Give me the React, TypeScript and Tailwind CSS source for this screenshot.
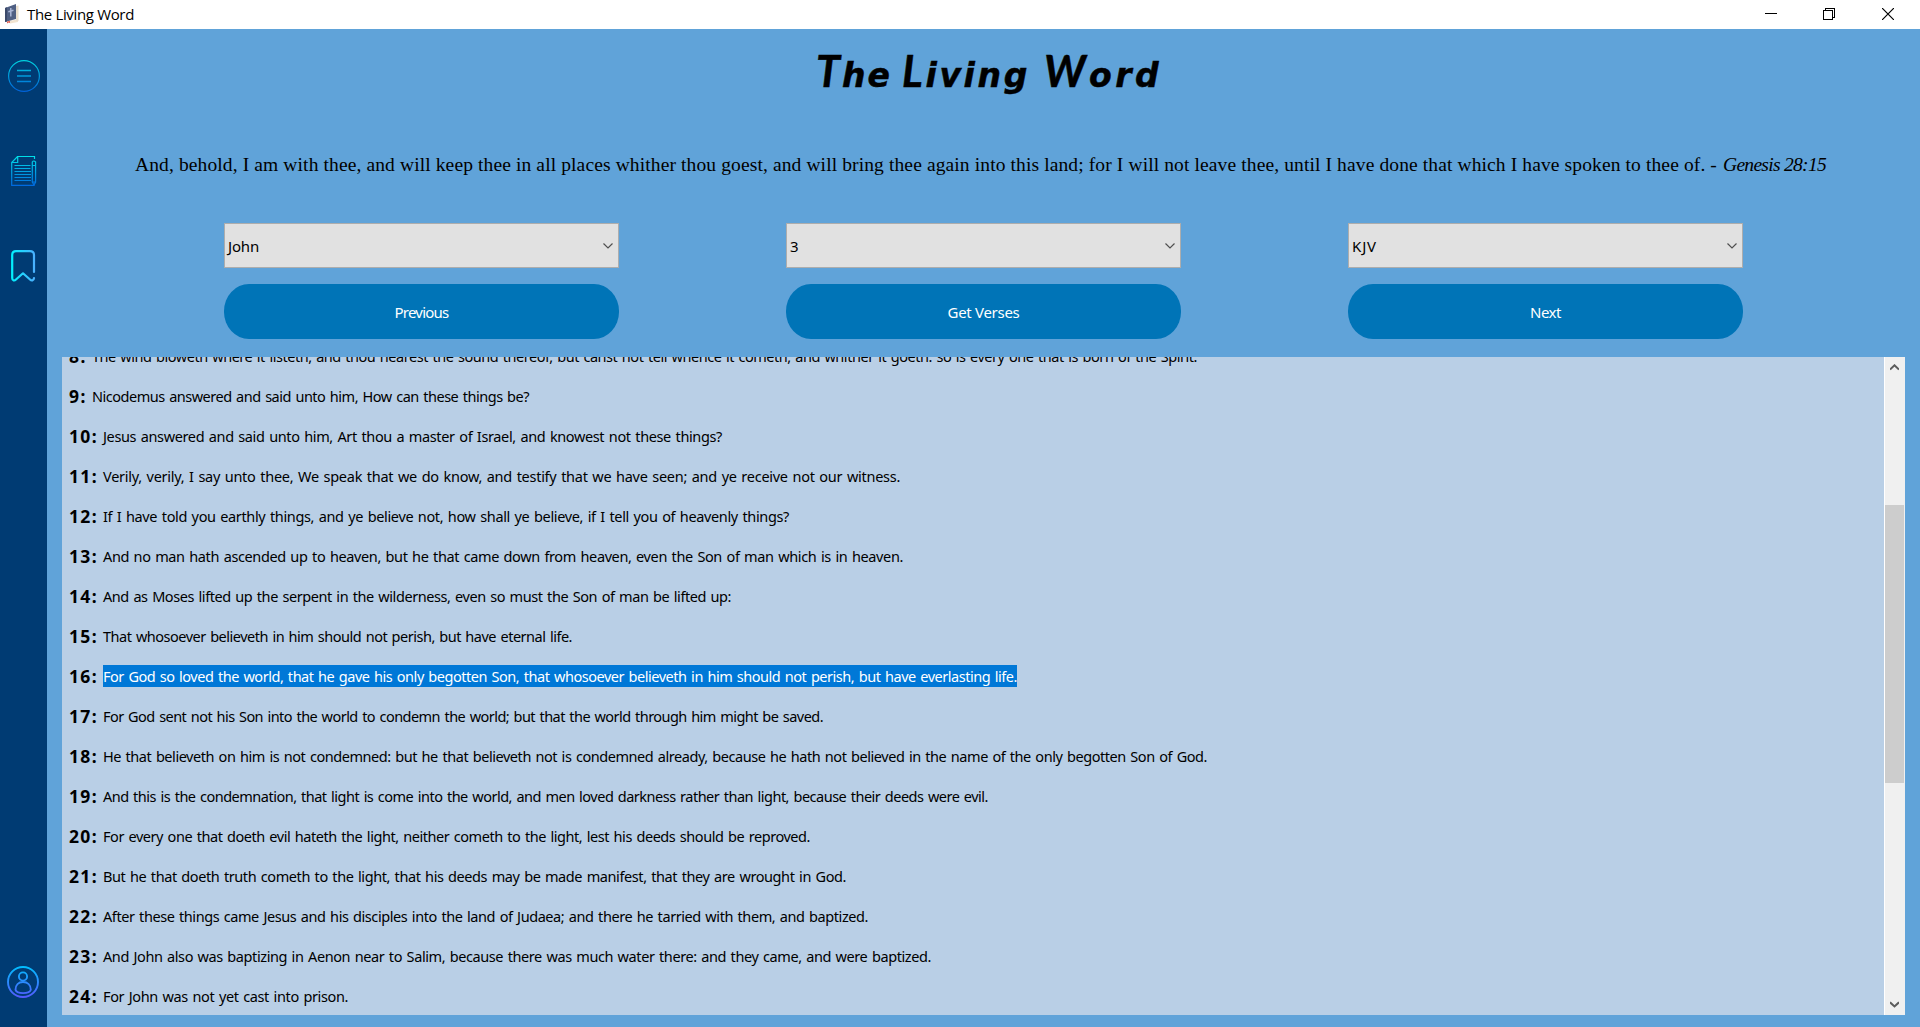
import { useLayoutEffect, useRef, type ReactNode } from "react";

/** Spreads its text over an exact width by adjusting the tracking. */
function Fit({ width, className = "", children }: { width: number; className?: string; children: ReactNode }) {
  const ref = useRef<HTMLSpanElement>(null);
  useLayoutEffect(() => {
    const el = ref.current;
    if (!el) return;
    el.style.letterSpacing = "0px";
    const n = (el.textContent || "").length;
    const natural = el.getBoundingClientRect().width;
    el.style.letterSpacing = `${(width - natural) / n}px`;
  }, [width]);
  return (
    <span ref={ref} className={`inline-block shrink-0 whitespace-pre ${className}`}>
      {children}
    </span>
  );
}

const verses: [number, number, string][] = [
  [8, 1105, "The wind bloweth where it listeth, and thou hearest the sound thereof, but canst not tell whence it cometh, and whither it goeth: so is every one that is born of the Spirit."],
  [9, 437, "Nicodemus answered and said unto him, How can these things be?"],
  [10, 619, "Jesus answered and said unto him, Art thou a master of Israel, and knowest not these things?"],
  [11, 797, "Verily, verily, I say unto thee, We speak that we do know, and testify that we have seen; and ye receive not our witness."],
  [12, 686, "If I have told you earthly things, and ye believe not, how shall ye believe, if I tell you of heavenly things?"],
  [13, 800, "And no man hath ascended up to heaven, but he that came down from heaven, even the Son of man which is in heaven."],
  [14, 628, "And as Moses lifted up the serpent in the wilderness, even so must the Son of man be lifted up:"],
  [15, 469, "That whosoever believeth in him should not perish, but have eternal life."],
  [16, 914, "For God so loved the world, that he gave his only begotten Son, that whosoever believeth in him should not perish, but have everlasting life."],
  [17, 720, "For God sent not his Son into the world to condemn the world; but that the world through him might be saved."],
  [18, 1104, "He that believeth on him is not condemned: but he that believeth not is condemned already, because he hath not believed in the name of the only begotten Son of God."],
  [19, 885, "And this is the condemnation, that light is come into the world, and men loved darkness rather than light, because their deeds were evil."],
  [20, 707, "For every one that doeth evil hateth the light, neither cometh to the light, lest his deeds should be reproved."],
  [21, 743, "But he that doeth truth cometh to the light, that his deeds may be made manifest, that they are wrought in God."],
  [22, 765, "After these things came Jesus and his disciples into the land of Judaea; and there he tarried with them, and baptized."],
  [23, 828, "And John also was baptizing in Aenon near to Salim, because there was much water there: and they came, and were baptized."],
  [24, 245, "For John was not yet cast into prison."],
];

const columns = [
  { value: "John", valueWidth: 31, action: "Previous", actionWidth: 54 },
  { value: "3", valueWidth: 8, action: "Get Verses", actionWidth: 72 },
  { value: "KJV", valueWidth: 25, action: "Next", actionWidth: 31 },
];

function TitleBar() {
  return (
    <header className="flex h-[29px] shrink-0 items-center bg-white pl-[5px]">
      <svg width="14" height="20" viewBox="0 0 14 20" className="-mt-px">
        <path d="M3 17 13 15.500V18L5 19.500Z" fill="#f1e4d0" />
        <path d="M11 2 13.500 1.500V17L11 17Z" fill="#eadfce" />
        <path d="M0 4 11 0V15L0 18Z" fill="#4f5f83" />
        <path d="M0 4 2 3.300V17.500L0 18Z" fill="#3c4a6b" />
        <path d="M5.800 4V12.500M3.300 7.800 8.500 6.300" stroke="#a9b5d6" strokeWidth="1.500" fill="none" />
        <path d="M2 17.500 5 17V19L3.500 18.500 2 19.500Z" fill="#e35b4b" />
      </svg>
      <Fit width={107} className="-mt-[2px] ml-[8px] font-['Open_Sans','Noto_Sans',sans-serif] text-[15px] leading-[20px] text-black">
        The Living Word
      </Fit>
      <div className="-mt-px ml-auto flex items-center pr-[26px]">
        <svg width="12" height="12" viewBox="0 0 12 12" className="mr-[46px]" shapeRendering="crispEdges">
          <path d="M0 5.500H12" stroke="#000" />
        </svg>
        <svg width="12" height="12" viewBox="0 0 12 12" className="mr-[47px]" shapeRendering="crispEdges" fill="none" stroke="#000">
          <path d="M.5 2.500H9.500V11.500H.5ZM2.500 2.500V.5H11.500V9.500H9.500" />
        </svg>
        <svg width="12" height="12" viewBox="0 0 12 12" fill="none" stroke="#000" strokeWidth="1.200">
          <path d="M0 0 12 12M12 0 0 12" />
        </svg>
      </div>
    </header>
  );
}

function Sidebar() {
  return (
    <nav className="flex w-[47px] shrink-0 flex-col items-start bg-[#003b73] pt-[31px]">
      <svg width="32" height="32" viewBox="0 0 32 32" fill="none" className="ml-[8px]">
        <defs>
          <linearGradient id="menuTone" gradientUnits="userSpaceOnUse" x1="0" y1="0" x2="0" y2="32">
            <stop stopColor="#00d5e0" />
            <stop offset="1" stopColor="#0060d8" />
          </linearGradient>
        </defs>
        <circle cx="16" cy="16" r="15.400" stroke="url(#menuTone)" strokeWidth="1.200" />
        <path d="M9 10.500H23M9 16H23M9 21.500H23" stroke="url(#menuTone)" strokeWidth="1.300" />
      </svg>
      <svg width="26" height="31" viewBox="0 0 26 31" fill="none" className="ml-[11px] mt-[63px]">
        <defs>
          <linearGradient id="noteTone" gradientUnits="userSpaceOnUse" x1="0" y1="0" x2="0" y2="31">
            <stop stopColor="#00e5e8" />
            <stop offset="1" stopColor="#0068e0" />
          </linearGradient>
        </defs>
        <g stroke="url(#noteTone)" strokeWidth="1.200">
          <path d="M23.500 4V1.500H6.500L.7 7.500V30.300H23.500" />
          <path d="M6.700 2V7.500H1" />
          <path d="M3.500 10.500H19.500M3.500 13.500H19.500M3.500 16.500H20M3.500 19.500H20M3.500 22.500H20M3.500 25.500H20" />
          <path d="M21.300 7Q22.700 5 24.600 7V27L23 30 21.300 27ZM21.300 10.500H24.600M21.300 27H24.600" />
        </g>
      </svg>
      <svg width="26" height="32" viewBox="0 0 26 32" fill="none" className="ml-[11px] mt-[64px]">
        <defs>
          <linearGradient id="markTone" gradientUnits="userSpaceOnUse" x1="0" y1="0" x2="25" y2="0">
            <stop stopColor="#00f2fe" />
            <stop offset="1" stopColor="#4facfe" />
          </linearGradient>
        </defs>
        <path
          d="M23 22V5Q23 1.200 19 1.200H5Q1.200 1.200 1.200 5V28C1.200 31 3.500 31 5 29.500L12 23.300 19 29.500C20.500 31 22.800 30.800 23 28.200"
          stroke="url(#markTone)"
          strokeWidth="2.200"
          strokeLinecap="round"
          strokeLinejoin="round"
        />
      </svg>
      <svg width="32" height="32" viewBox="0 0 32 32" fill="none" className="mb-[29px] ml-[7px] mt-auto">
        <defs>
          <linearGradient id="userTone" gradientUnits="userSpaceOnUse" x1="0" y1="0" x2="0" y2="32">
            <stop stopColor="#00c0ff" />
            <stop offset="1" stopColor="#5558ff" />
          </linearGradient>
        </defs>
        <g stroke="url(#userTone)" strokeWidth="1.900">
          <circle cx="16" cy="16" r="15" />
          <circle cx="16" cy="10.500" r="4.100" />
          <path d="M8.500 23.800C8.500 19 11.500 16 16 16S23.800 19 23.800 23.800C22.500 28.200 9.500 28.200 8.500 23.800Z" />
        </g>
      </svg>
    </nav>
  );
}

function Heading() {
  const word = "font-['DejaVu_Sans',sans-serif] text-[33px] font-bold italic leading-[56px] [-webkit-text-stroke:0.5px_#000] [stroke-linejoin:round]";
  const cap = "font-['Lato',sans-serif] text-[43px]";
  return (
    <h1 className="ml-[769px] mt-[14px] flex h-[64px] items-baseline text-black">
      <Fit width={76} className={word}><span className={cap}>T</span>he</Fit>
      <Fit width={128} className={`ml-[10px] ${word}`}><span className={cap}>L</span>iving</Fit>
      <Fit width={118} className={`ml-[14px] ${word}`}><span className={cap}>W</span>ord</Fit>
    </h1>
  );
}

const body = "font-['Noto_Sans',sans-serif] text-[14.5px] leading-[22px] [word-spacing:1.2px]";

function Controls() {
  return (
    <div className="mt-[43px] flex justify-center gap-[167px]">
      {columns.map((c) => (
        <div key={c.value} className="flex w-[395px] flex-col gap-4">
          <div className="flex h-[45px] items-center border border-[#adadad] bg-[#e1e1e1] pl-[3px] pr-[5px]">
            <Fit width={c.valueWidth} className="mt-px font-['Noto_Sans',sans-serif] text-[15px] leading-[20px] text-black">{c.value}</Fit>
            <svg width="10" height="6" viewBox="0 0 10 6" fill="none" className="ml-auto">
              <path d="M.5 .5 5 5 9.500 .5" stroke="#505050" strokeWidth="1.200" />
            </svg>
          </div>
          <button className="flex h-[55px] items-center justify-center rounded-[25px/27px] bg-[#0074b7] text-white">
            <Fit width={c.actionWidth} className="mt-px font-['Noto_Sans',sans-serif] text-[15px] leading-[20px]">{c.action}</Fit>
          </button>
        </div>
      ))}
    </div>
  );
}

function Verses() {
  return (
    <section className="ml-[15px] mt-[18px] flex h-[658px] w-[1843px] bg-[#b9cfe6]">
      <div className="h-full w-[1822px] overflow-hidden">
        <div className="-mt-[21px] flex flex-col pl-[7px] text-black">
          {verses.map(([n, width, text]) => (
            <p key={n} className="flex h-[40px] items-center">
              <Fit width={n < 10 ? 18 : 29} className="mr-[5px] font-['Noto_Sans',sans-serif] text-[17.5px] font-bold leading-[22px]">
                {`${n}:`}
              </Fit>
              {n === 16 ? (
                <span className="flex bg-[#0078d7] text-white">
                  <Fit width={width} className={body}>{text}</Fit>
                </span>
              ) : (
                <Fit width={width} className={body}>{text}</Fit>
              )}
            </p>
          ))}
        </div>
      </div>
      <div className="flex w-[21px] flex-col border-l border-white bg-[#f0f0f0]">
        <svg width="9" height="7" viewBox="0 0 9 7" fill="none" className="ml-[5px] mt-[7px]">
          <path d="M0 5.500 4.500 1.300 9 5.500" stroke="#5c5c5c" strokeWidth="2" />
        </svg>
        <div className="mt-[134px] h-[278px] w-[19px] bg-[#cdcdcd]" />
        <svg width="9" height="7" viewBox="0 0 9 7" fill="none" className="mb-[7px] ml-[5px] mt-auto">
          <path d="M0 1.300 4.500 5.500 9 1.300" stroke="#5c5c5c" strokeWidth="2" />
        </svg>
      </div>
    </section>
  );
}

export default function App() {
  return (
    <div className="flex h-[1027px] w-[1920px] flex-col overflow-hidden bg-[#60a3d9]">
      <TitleBar />
      <div className="flex min-h-0 flex-1">
        <Sidebar />
        <main className="flex min-w-0 flex-1 flex-col">
          <Heading />
          <div className="ml-[88px] mt-[43px] flex h-[30px] items-center font-['Liberation_Serif',serif] text-[19.5px] leading-[30px] text-black">
            <Fit width={1582}>
              And, behold, I am with thee, and will keep thee in all places whither thou goest, and will bring thee again into this land; for I will not leave thee, until I have done that which I have spoken to thee of. -
            </Fit>
            <Fit width={103} className="ml-[6px] italic">Genesis 28:15</Fit>
          </div>
          <Controls />
          <Verses />
        </main>
      </div>
    </div>
  );
}
